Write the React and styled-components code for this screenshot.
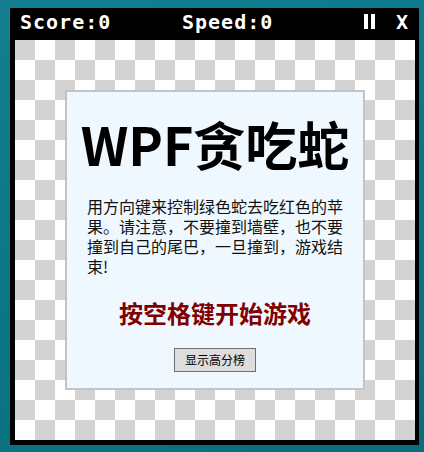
import React from "react";
import styled, { createGlobalStyle } from "styled-components";

const Global = createGlobalStyle`
  html, body {
    margin: 0;
    padding: 0;
    width: 424px;
    height: 452px;
    overflow: hidden;
    background: linear-gradient(160deg, #137f8f 0%, #0c7585 55%, #0a6d7d 100%);
  }
  #root {
    padding: 8px 0 0 10px;
  }
`;

const Frame = styled.div`
  display: inline-flex;
  flex-direction: column;
  background: #000;
  padding: 0 4px 5px 5px;
`;

const Bar = styled.div`
  display: flex;
  align-items: flex-start;
  height: 32px;
  box-sizing: border-box;
  padding: 4px 6px 0 5px;
  color: #fff;
  font-family: "DejaVu Sans Mono", monospace;
  font-weight: bold;
  font-size: 20px;
  line-height: 20px;
  letter-spacing: 1px;
`;

const Stat = styled.span`
  width: ${(p) => p.$width || "auto"};
  flex: ${(p) => (p.$grow ? 1 : "none")};
  white-space: nowrap;
`;

const Control = styled.span`
  display: inline-flex;
  align-items: flex-start;
  margin-left: ${(p) => p.$gap || "0px"};
`;

const Board = styled.div`
  width: 400px;
  height: 400px;
  display: grid;
  place-items: center;
  background: repeating-conic-gradient(#ffffff 0 25%, #d3d3d3 0 50%) 0 0 / 40px 40px;
`;

const Panel = styled.div`
  width: 300px;
  height: 300px;
  box-sizing: border-box;
  border: 2px solid #c4c4c4;
  background: #f0f8ff;
  display: flex;
  flex-direction: column;
  align-items: center;
  padding-top: 22px;
  font-family: "Noto Sans CJK SC", "Noto Sans", sans-serif;
`;

const Title = styled.h1`
  margin: 0;
  font-size: 52px;
  line-height: 60px;
  font-weight: 700;
  color: #000;
  white-space: nowrap;
`;

const Intro = styled.p`
  margin: 22px 0 0 0;
  align-self: flex-start;
  margin-left: 20px;
  width: 262px;
  font-size: 16px;
  line-height: 20px;
  color: #111;
`;

const Prompt = styled.div`
  margin-top: 22px;
  font-size: 24px;
  line-height: 30px;
  font-weight: 700;
  color: #800000;
`;

const Button = styled.button`
  margin-top: 20px;
  width: 82px;
  height: 24px;
  padding: 0;
  border: 1px solid #707070;
  background: #dddddd;
  color: #000;
  font-family: "Noto Sans CJK SC", sans-serif;
  font-size: 12px;
  line-height: 20px;
  cursor: pointer;
`;

const PauseIcon = () => (
  <svg width="13" height="15" viewBox="0 0 13 15" style={{ marginTop: 2 }}>
    <rect x="1" y="0" width="4" height="15" fill="#fff" />
    <rect x="8" y="0" width="4" height="15" fill="#fff" />
  </svg>
);

export default function App() {
  return (
    <>
      <Global />
      <Frame>
        <Bar>
          <Stat $width="162px">Score:0</Stat>
          <Stat $grow>Speed:0</Stat>
          <Control>
            <PauseIcon />
          </Control>
          <Control $gap="20px">X</Control>
        </Bar>
        <Board>
          <Panel>
            <Title>WPF贪吃蛇</Title>
            <Intro>
              用方向键来控制绿色蛇去吃红色的苹果。请注意，不要撞到墙壁，也不要撞到自己的尾巴，一旦撞到，游戏结束!
            </Intro>
            <Prompt>按空格键开始游戏</Prompt>
            <Button>显示高分榜</Button>
          </Panel>
        </Board>
      </Frame>
    </>
  );
}
